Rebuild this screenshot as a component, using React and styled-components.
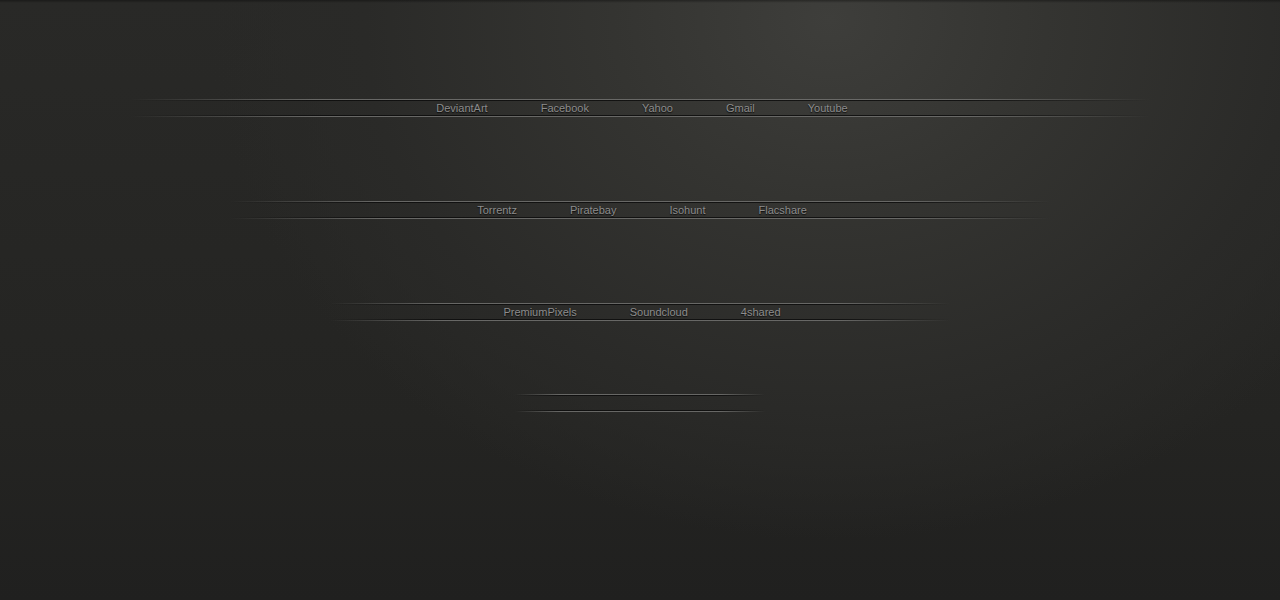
import React from "react"
import styled, { createGlobalStyle } from "styled-components"

const GlobalStyle = createGlobalStyle`
  html, body {
    margin: 0;
    padding: 0;
    height: 100%;
  }
  body {
    background: #232321;
    font-family: "Liberation Sans", Arial, sans-serif;
  }
`

const Page = styled.div`
  width: 1280px;
  height: 600px;
  overflow: hidden;
  box-sizing: border-box;
  padding-top: 99px;
  display: flex;
  flex-direction: column;
  align-items: center;
  background:
    linear-gradient(to bottom, rgba(0, 0, 0, 0.35) 0, rgba(0, 0, 0, 0) 3px),
    radial-gradient(ellipse 620px 520px at 830px 20px, #3e3e3b 0%, #343431 35%, #2a2a28 75%, rgba(36, 36, 34, 0) 100%),
    linear-gradient(to bottom, #292927 0%, #242422 70%, #20201f 100%);
`

const Bar = styled.div`
  width: ${(p) => p.width}px;
  margin-bottom: ${(p) => p.gap || 84}px;
  display: flex;
  flex-direction: column;
`

const Line = styled.div`
  height: 1px;
  background: linear-gradient(
    to right,
    rgba(${(p) => (p.light ? "110, 110, 108" : "10, 10, 10")}, 0) 0%,
    rgba(${(p) => (p.light ? "110, 110, 108" : "10, 10, 10")}, ${(p) => (p.light ? 0.9 : 0.8)}) 18%,
    rgba(${(p) => (p.light ? "110, 110, 108" : "10, 10, 10")}, ${(p) => (p.light ? 0.9 : 0.8)}) 82%,
    rgba(${(p) => (p.light ? "110, 110, 108" : "10, 10, 10")}, 0) 100%
  );
`

const Nav = styled.nav`
  height: 14px;
  display: flex;
  justify-content: center;
  align-items: center;
  padding-left: 4px;
`

const Link = styled.a`
  padding: 0 26.5px;
  font-size: 11px;
  line-height: 14px;
  color: #8c8c8c;
  text-decoration: none;
  text-shadow: 0 1px 1px #0c0c0c;
`

const rows = [
  { width: 1020, links: ["DeviantArt", "Facebook", "Yahoo", "Gmail", "Youtube"] },
  { width: 820, links: ["Torrentz", "Piratebay", "Isohunt", "Flacshare"] },
  { width: 620, links: ["PremiumPixels", "Soundcloud", "4shared"], gap: 73 },
  { width: 250, links: [] },
]

function LinkBar({ width, links, gap }) {
  return (
    <Bar width={width} gap={gap}>
      <Line light />
      <Line />
      <Nav>
        {links.map((l) => (
          <Link key={l} href="#">
            {l}
          </Link>
        ))}
      </Nav>
      <Line />
      <Line light />
    </Bar>
  )
}

export default function App() {
  return (
    <>
      <GlobalStyle />
      <Page>
        {rows.map((r, i) => (
          <LinkBar key={i} {...r} />
        ))}
      </Page>
    </>
  )
}
